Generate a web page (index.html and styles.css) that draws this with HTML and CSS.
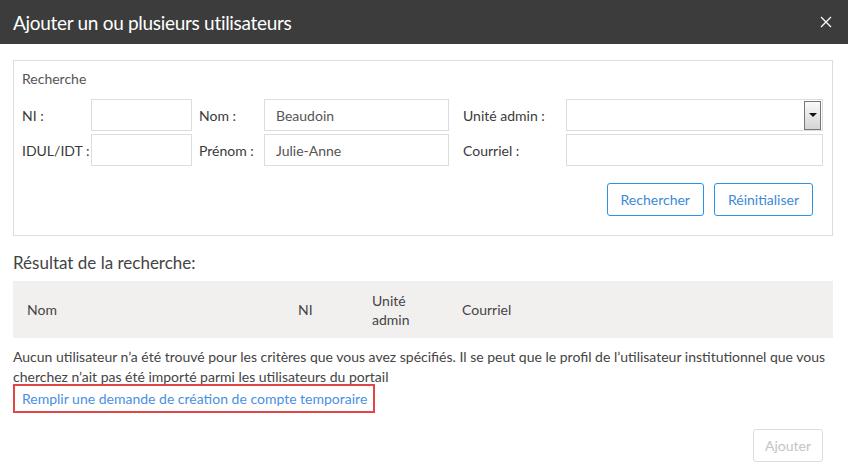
FILE: index.html
```html
<!DOCTYPE html>
<html lang="fr">
<head>
  <meta charset="UTF-8">
  <title>Ajouter un ou plusieurs utilisateurs</title>
  <link rel="stylesheet" href="styles.css">
</head>
<body>
<div class="modal">
  <div class="modal-header">
    <h1 class="modal-title">Ajouter un ou plusieurs utilisateurs</h1>
    <svg class="modal-close" width="12" height="12" viewBox="0 0 12 12">
      <path d="M1 1 L11 11 M11 1 L1 11" stroke="#fff" stroke-width="1.3" fill="none"/>
    </svg>
  </div>

  <div class="modal-body">
    <div class="search-box">
      <div class="search-title">Recherche</div>

      <div class="search-grid">
        <label class="lbl">NI :</label>
        <input class="txt" type="text" value="">
        <label class="lbl lbl-2">Nom :</label>
        <input class="txt" type="text" value="Beaudoin">
        <label class="lbl lbl-3">Unité admin :</label>
        <div class="fake-select"><span class="fake-select-arrow"></span></div>

        <label class="lbl">IDUL/IDT :</label>
        <input class="txt" type="text" value="">
        <label class="lbl lbl-2">Prénom :</label>
        <input class="txt" type="text" value="Julie-Anne">
        <label class="lbl lbl-3">Courriel :</label>
        <input class="txt" type="text" value="">
      </div>

      <div class="search-actions">
        <button class="btn btn-primary">Rechercher</button>
        <button class="btn btn-primary">Réinitialiser</button>
      </div>
    </div>

    <h2 class="result-title">Résultat de la recherche:</h2>

    <table class="result-tab">
      <thead>
        <tr>
          <td class="col-nom">Nom</td>
          <td class="col-ni">NI</td>
          <td class="col-unite">Unité<br>admin</td>
          <td class="col-courriel">Courriel</td>
        </tr>
      </thead>
    </table>

    <p class="no-result">Aucun utilisateur n’a été trouvé pour les critères que vous avez spécifiés. Il se peut que le profil de l’utilisateur institutionnel que vous cherchez n’ait pas été importé parmi les utilisateurs du portail</p>
    <div class="link-box"><a class="temp-link" href="#">Remplir une demande de création de compte temporaire</a></div>

    <div class="modal-footer">
      <button class="btn btn-disabled" disabled>Ajouter</button>
    </div>
  </div>
</div>
</body>
</html>
```

FILE: styles.css
```css
body {
  margin: 0;
  background: #fff;
  font-family: Lato, "Open Sans", sans-serif;
  color: #444;
}

.modal {
  width: 848px;
}

.modal-header {
  background: #3c3c3c;
  height: 44px;
  display: flex;
  align-items: center;
  justify-content: space-between;
  padding: 0 16px 0 13px;
  box-sizing: border-box;
}

.modal-title {
  margin: 0;
  color: #fff;
  font-weight: normal;
  font-size: 19px;
  letter-spacing: -0.3px;
}

.modal-close {
  display: block;
}

.modal-body {
  padding: 16px 15px 0 13px;
}

.search-box {
  border: 1px solid #ddd;
  padding: 9px 9px 19px 8px;
}

.search-title {
  font-size: 14px;
  line-height: 18px;
  color: #555;
  margin-bottom: 11px;
}

.search-grid {
  display: grid;
  grid-template-columns: 69px 101px 72px 185px 117px 257px;
  grid-auto-rows: 32px;
  row-gap: 3px;
  align-items: center;
}

.lbl {
  font-size: 14px;
  color: #3a3a3a;
}

.lbl-2 {
  padding-left: 7px;
}

.lbl-3 {
  padding-left: 14px;
}

.txt {
  box-sizing: border-box;
  width: 100%;
  height: 32px;
  border: 1px solid #ddd;
  padding: 0 11px;
  font-family: Lato, sans-serif;
  font-size: 14px;
  color: #555;
  outline: none;
}

.fake-select {
  box-sizing: border-box;
  height: 32px;
  border: 1px solid #ddd;
  display: flex;
  justify-content: flex-end;
  align-items: center;
  padding-right: 1px;
}

.fake-select-arrow {
  width: 15px;
  height: 27px;
  border: 1px solid #777;
  background: linear-gradient(#fafafa, #d4d4d4);
  position: relative;
}

.fake-select-arrow:after {
  content: "";
  position: absolute;
  left: 4px;
  top: 11px;
  border-left: 4px solid transparent;
  border-right: 4px solid transparent;
  border-top: 4px solid #111;
}

.search-actions {
  display: flex;
  justify-content: flex-end;
  gap: 10px;
  margin-top: 17px;
  padding-right: 10px;
}

.btn {
  font-family: Lato, sans-serif;
  font-size: 14px;
  height: 33px;
  padding: 0 13px;
  background: #fff;
  border-radius: 3px;
}

.btn-primary {
  border: 1px solid #2c93e8;
  color: #3a8ad8;
}

.btn-disabled {
  border: 1px solid #ddd;
  color: #c4c4c4;
  padding: 0 11px;
}

.result-title {
  font-size: 17px;
  font-weight: normal;
  color: #444;
  margin: 16px 0 7px;
  line-height: 22px;
}

.result-tab {
  width: 820px;
  border-collapse: collapse;
}

.result-tab thead td {
  background: #f2f0ef;
  height: 57px;
  font-size: 14px;
  color: #444;
  padding: 0 14px;
  line-height: 19px;
  box-sizing: border-box;
}

.col-nom {
  width: 271px;
}

.col-ni {
  width: 74px;
}

.col-unite {
  width: 90px;
}

.no-result {
  margin: 9px 0 0;
  font-size: 14px;
  line-height: 20px;
  color: #444;
}

.link-box {
  display: inline-block;
  border: 2px solid #e04646;
  padding: 2px 6px 2px 7px;
  margin-top: -3px;
  line-height: 20px;
}

.temp-link {
  color: #4a8fe3;
  font-size: 14px;
  text-decoration: none;
}

.modal-footer {
  display: flex;
  justify-content: flex-end;
  padding: 16px 10px 0 0;
}
```
